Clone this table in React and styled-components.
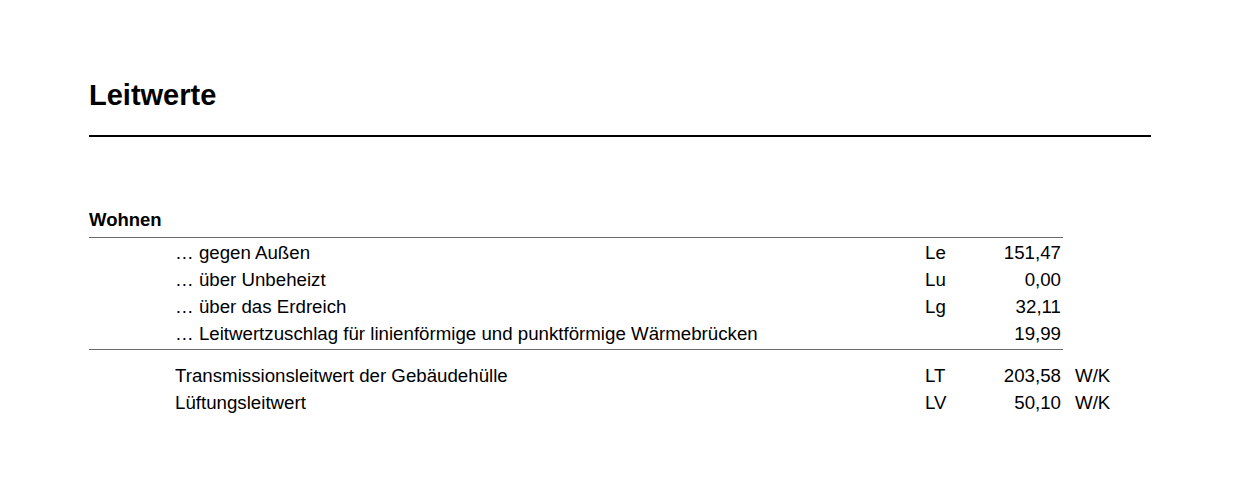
import React from 'react';
import styled, { createGlobalStyle } from 'styled-components';

const Global = createGlobalStyle`
  body {
    margin: 0;
    background: #fff;
    color: #000;
    font-family: "Liberation Sans", Arial, sans-serif;
  }
`;

const Page = styled.div`
  padding: 79px 89px 0;
`;

const Title = styled.h1`
  margin: 0;
  font-size: 29px;
  line-height: 32px;
  font-weight: bold;
`;

const Rule = styled.div`
  margin-top: 24px;
  height: 2px;
  background: #000;
`;

const Table = styled.table`
  margin-top: 69px;
  border-collapse: collapse;
  font-size: 18.7px;
  line-height: 27px;
`;

const Cell = styled.td`
  padding: 0;
  white-space: nowrap;
  vertical-align: top;
  text-align: ${p => (p.$right ? 'right' : 'left')};
`;

const Section = styled.th`
  padding: 0 0 4px;
  text-align: left;
  font-size: 18.5px;
  font-weight: bold;
  border-bottom: 1px solid #6b6b6b;
`;

const Row = styled.tr`
  ${p => p.$first && `td { padding-top: 1px; }`}
  ${p => p.$last && `td:not(.unit) { border-bottom: 1px solid #6b6b6b; }`}
  ${p => p.$last && `td { padding-bottom: 2px; }`}
`;

const Spacer = styled.tr`
  height: 12px;
`;

const Indent = styled(Cell)`
  width: 86px;
`;

const Label = styled(Cell)`
  width: 750px;
`;

const Symbol = styled(Cell)`
  width: 60px;
`;

const Value = styled(Cell)`
  width: 76px;
  padding-right: 2px;
  text-align: right;
`;

const Unit = styled(Cell)`
  padding-left: 12px;
`;

const parts = [
  { label: '… gegen Außen', sym: 'Le', value: '151,47' },
  { label: '… über Unbeheizt', sym: 'Lu', value: '0,00' },
  { label: '… über das Erdreich', sym: 'Lg', value: '32,11' },
  { label: '… Leitwertzuschlag für linienförmige und punktförmige Wärmebrücken', sym: '', value: '19,99' },
];

const totals = [
  { label: 'Transmissionsleitwert der Gebäudehülle', sym: 'LT', value: '203,58', unit: 'W/K' },
  { label: 'Lüftungsleitwert', sym: 'LV', value: '50,10', unit: 'W/K' },
];

export default function App() {
  return (
    <Page>
      <Global />
      <Title>Leitwerte</Title>
      <Rule />
      <Table>
        <tbody>
          <tr>
            <Section colSpan={4}>Wohnen</Section>
            <Cell />
          </tr>
          {parts.map((p, i) => (
            <Row key={p.label} $first={i === 0} $last={i === parts.length - 1}>
              <Indent />
              <Label>{p.label}</Label>
              <Symbol>{p.sym}</Symbol>
              <Value>{p.value}</Value>
              <Unit className="unit" />
            </Row>
          ))}
          <Spacer />
          {totals.map(t => (
            <Row key={t.label}>
              <Indent />
              <Label>{t.label}</Label>
              <Symbol>{t.sym}</Symbol>
              <Value>{t.value}</Value>
              <Unit className="unit">{t.unit}</Unit>
            </Row>
          ))}
        </tbody>
      </Table>
    </Page>
  );
}
